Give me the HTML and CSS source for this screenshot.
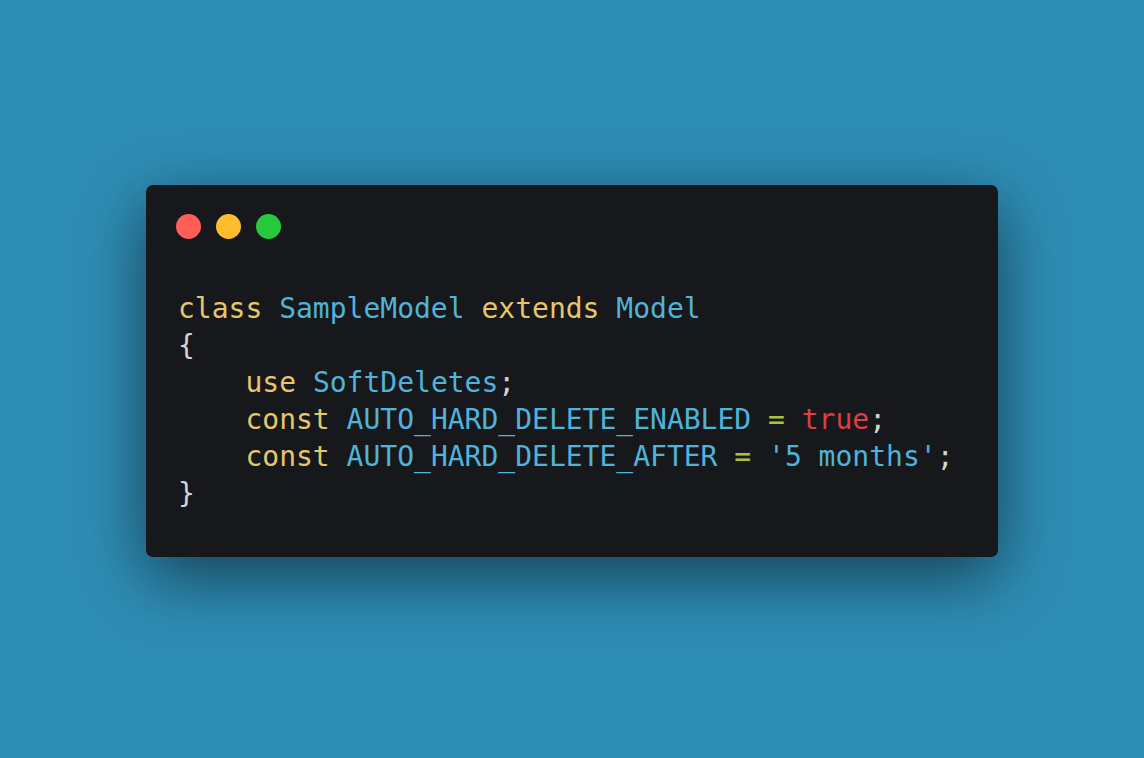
FILE: index.html
```html
<!DOCTYPE html>
<html>
<head>
<meta charset="utf-8">
<link rel="stylesheet" href="styles.css">
</head>
<body>
<div class="stage">
  <div class="window">
    <div class="dots">
      <span class="dot red"></span>
      <span class="dot yellow"></span>
      <span class="dot green"></span>
    </div>
<pre class="code"><span class="kw">class</span> <span class="id">SampleModel</span> <span class="kw">extends</span> <span class="id">Model</span>
<span class="pn">{</span>
    <span class="kw">use</span> <span class="id">SoftDeletes</span><span class="pn">;</span>
    <span class="kw">const</span> <span class="id">AUTO_HARD_DELETE_ENABLED</span> <span class="op">=</span> <span class="bool">true</span><span class="pn">;</span>
    <span class="kw">const</span> <span class="id">AUTO_HARD_DELETE_AFTER</span> <span class="op">=</span> <span class="str">'5 months'</span><span class="pn">;</span>
<span class="pn">}</span></pre>
  </div>
</div>
</body>
</html>
```

FILE: styles.css
```css
html, body {
  margin: 0;
  padding: 0;
  background: #2e8db5;
}
.stage {
  width: 1144px;
  height: 758px;
  display: flex;
  justify-content: center;
  align-items: flex-start;
  padding-top: 185px;
  box-sizing: border-box;
}
.window {
  width: 852px;
  height: 372px;
  box-sizing: border-box;
  background: #17181b;
  border-radius: 7px;
  box-shadow: 0 20px 68px rgba(0, 0, 0, 0.55);
  padding: 29px 30px 0 30px;
}
.dots {
  display: flex;
  gap: 15px;
  height: 25px;
}
.dot {
  width: 25px;
  height: 25px;
  border-radius: 50%;
  display: block;
}
.red { background: #ff5f56; }
.yellow { background: #ffbd2e; }
.green { background: #27c93f; }
.code {
  margin: 51px 0 0 2px;
  font-family: "DejaVu Sans Mono", monospace;
  font-size: 28px;
  line-height: 37px;
  color: #d4d4d4;
}
.kw { color: #e5c76b; }
.id { color: #4fb3da; }
.op { color: #a8c23e; }
.bool { color: #de3d46; }
.str { color: #4fb3da; }
.pn { color: #d4d4d4; }
```
